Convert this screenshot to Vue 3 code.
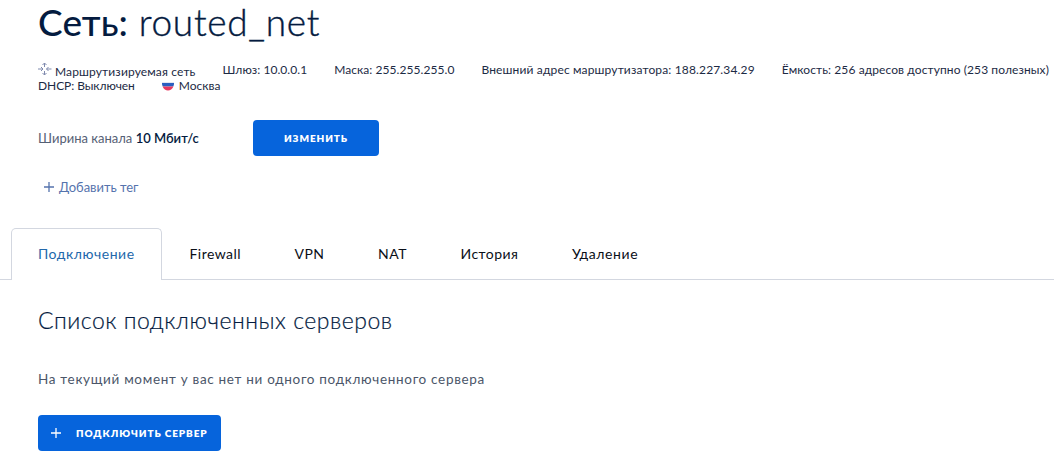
<template>
  <main class="page">
    <h1 class="title"><b>Сеть:</b> <span>{{ network.name }}</span></h1>

    <div class="info">
      <div class="info-row">
        <span class="info-item type">
          <svg class="type-icon" viewBox="0 0 14 14" width="14" height="14">
            <path d="M6.500 1v4M6.500 9v4M0 7h5M8.500 7h5M4.500 3l2-2 2 2M4.500 11l2 2 2-2M3 5l2 2-2 2M10.500 5l-2 2 2 2" />
          </svg>
          <span class="type-name">Маршрутизируемая сеть</span>
        </span>
        <span v-for="item in network.params" :key="item.id" :class="['info-item', item.id]">{{ item.text }}</span>
      </div>
      <div class="info-row">
        <span class="info-item dhcp">DHCP: Выключен</span>
        <span class="info-item city">
          <svg class="flag" viewBox="0 0 12 9" width="12" height="9">
            <path d="M0 0h12v2H0z" fill="#e3e6f1" />
            <path d="M0 1h12a6 6 0 0 1-.8 3.500H.8A6 6 0 0 1 0 1z" fill="#2b5fc0" />
            <path d="M.6 4.500h10.800C10.300 7.300 8.300 8.500 6 8.500S1.700 7.300.6 4.500z" fill="#e8385f" />
          </svg>
          <span class="city-name">Москва</span>
        </span>
      </div>
    </div>

    <div class="channel">
      <span class="channel-label">Ширина канала <b>10 Мбит/с</b></span>
      <button class="btn change"><span>Изменить</span></button>
    </div>

    <a class="add-tag">
      <svg viewBox="0 0 10 10" width="10" height="10"><path d="M5 0v10M0 5h10" /></svg>
      <span>Добавить тег</span>
    </a>

    <nav class="tabs">
      <a
        v-for="tab in tabs"
        :key="tab.id"
        :class="['tab', tab.id, { active: tab.id === current }]"
        @click="current = tab.id"
      ><span>{{ tab.title }}</span></a>
    </nav>

    <section class="servers">
      <h2>Список подключенных серверов</h2>
      <p>На текущий момент у вас нет ни одного подключенного сервера</p>
      <button class="btn connect">
        <svg viewBox="0 0 10 10" width="10" height="10"><path d="M5 0v10M0 5h10" /></svg>
        <span>Подключить сервер</span>
      </button>
    </section>
  </main>
</template>

<script setup>
import { ref } from "vue";

const current = ref("connection");

const network = {
  name: "routed_net",
  params: [
    { id: "gateway", text: "Шлюз: 10.0.0.1" },
    { id: "mask", text: "Маска: 255.255.255.0" },
    { id: "external", text: "Внешний адрес маршрутизатора: 188.227.34.29" },
    { id: "capacity", text: "Ёмкость: 256 адресов доступно (253 полезных)" },
  ],
};

const tabs = [
  { id: "connection", title: "Подключение" },
  { id: "firewall", title: "Firewall" },
  { id: "vpn", title: "VPN" },
  { id: "nat", title: "NAT" },
  { id: "history", title: "История" },
  { id: "remove", title: "Удаление" },
];
</script>

<style>
body {
  margin: 0;
  background: #fff;
  overflow: hidden;
}
</style>

<style scoped>
.page {
  height: 461px;
  overflow: hidden;
  font-family: Lato, "Open Sans", sans-serif;
  color: #041b3f;
}

.title {
  height: 44px;
  margin: 0 0 0 38px;
  font-size: 37px;
  line-height: 44px;
  font-weight: 300;
  letter-spacing: 0.7px;
  white-space: pre;
}

.title b {
  font-weight: 500;
  letter-spacing: 0.1px;
}

.title span {
  -webkit-text-stroke: 0.4px currentColor;
}

.info {
  margin: 18px 0 0 38px;
  color: #1c2a44;
  font-size: 12px;
  line-height: 16px;
  white-space: nowrap;
}

.info-row {
  display: flex;
  gap: 27px;
  height: 16px;
}

.type,
.city {
  display: flex;
}

.type-name {
  margin: 2px 0 0 3px;
  letter-spacing: 0.14px;
}

.gateway,
.mask {
  letter-spacing: 0.06px;
}

.external {
  letter-spacing: 0.15px;
}

.capacity {
  letter-spacing: 0.1px;
}

.dhcp {
  letter-spacing: -0.07px;
}

.type-icon {
  fill: none;
  stroke: #7f8aae;
  stroke-width: 1;
}

.flag {
  margin: 4px 5px 0 0;
}

.channel {
  display: flex;
  align-items: center;
  height: 36px;
  margin: 26px 0 0 38px;
  font-size: 13px;
}

.channel-label {
  width: 215px;
  color: #556075;
  white-space: nowrap;
}

.channel-label b {
  font-weight: 600;
  color: #041b3f;
}

.btn {
  display: flex;
  align-items: center;
  height: 36px;
  padding: 0;
  border: 0;
  border-radius: 4px;
  background: #0664dc;
  color: #fff;
  font: 800 10px Lato, "Open Sans", sans-serif;
  letter-spacing: 0.9px;
  text-transform: uppercase;
  white-space: nowrap;
}

.btn svg,
.add-tag svg {
  fill: none;
  stroke: currentColor;
  stroke-width: 1.3;
}

.change {
  justify-content: center;
  width: 126px;
}

.add-tag {
  display: flex;
  align-items: center;
  gap: 5px;
  height: 20px;
  margin: 21px 0 0 44px;
  color: #5573ad;
  font-size: 13px;
  letter-spacing: -0.05px;
}

.tabs {
  display: flex;
  height: 51px;
  margin-top: 31px;
  padding-left: 11px;
  border-bottom: 1px solid #d3d7e0;
  font-size: 14px;
  letter-spacing: 0.45px;
}

.tab {
  display: flex;
  align-items: center;
  padding: 0 26.8px;
  color: #0a0f18;
  white-space: nowrap;
}

.tab.active {
  box-sizing: border-box;
  width: 151px;
  height: 52px;
  padding: 0 26px 2px;
  border: 1px solid #d3d7e0;
  border-bottom: 0;
  border-radius: 5px 5px 0 0;
  background: #fff;
  color: #2368ab;
  letter-spacing: 0.53px;
}

.firewall {
  padding-left: 27.500px;
}

.remove {
  letter-spacing: 0.6px;
}

.servers {
  margin: 24px 0 0 38px;
}

h2 {
  margin: 0;
  font-size: 23px;
  line-height: 32px;
  font-weight: 300;
  letter-spacing: 0.52px;
  -webkit-text-stroke: 0.2px currentColor;
}

p {
  margin: 33px 0 0;
  font-size: 13.500px;
  line-height: 20px;
  letter-spacing: 0.69px;
  color: #4b5669;
}

.connect {
  width: 183px;
  margin-top: 26px;
  padding-left: 13px;
}

.connect span {
  margin-left: 15px;
}
</style>
